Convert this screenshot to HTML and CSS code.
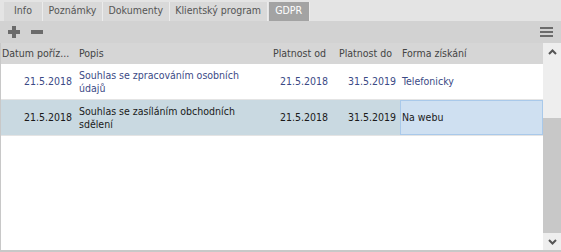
FILE: index.html
```html
<!DOCTYPE html>
<html lang="cs">
<head>
    <meta charset="UTF-8">
    <title>GDPR</title>
    <link rel="stylesheet" href="styles.css">
</head>
<body>
    <div class="panel">
        <div class="tabs">
            <div class="tab">Info</div>
            <div class="tab">Poznámky</div>
            <div class="tab">Dokumenty</div>
            <div class="tab">Klientský program</div>
            <div class="tab active">GDPR</div>
        </div>

        <div class="toolbar">
            <svg class="tool" width="14" height="14" viewBox="0 0 14 14">
                <rect x="5" y="1" width="4" height="12" fill="#6b6b6b"/>
                <rect x="1" y="5" width="12" height="4" fill="#6b6b6b"/>
            </svg>
            <svg class="tool" width="14" height="14" viewBox="0 0 14 14">
                <rect x="1" y="5" width="12" height="4" fill="#6b6b6b"/>
            </svg>
            <svg class="menu" width="13" height="12" viewBox="0 0 13 12">
                <rect x="0" y="1" width="13" height="2" fill="#6b6b6b"/>
                <rect x="0" y="5" width="13" height="2" fill="#6b6b6b"/>
                <rect x="0" y="9" width="13" height="2" fill="#6b6b6b"/>
            </svg>
        </div>

        <div class="grid-wrap">
            <div class="grid">
                <div class="row head">
                    <div class="cell c-date">Datum poříz...</div>
                    <div class="cell c-desc">Popis</div>
                    <div class="cell c-from">Platnost od</div>
                    <div class="cell c-to">Platnost do</div>
                    <div class="cell c-form">Forma získání</div>
                </div>
                <div class="row">
                    <div class="cell c-date num">21.5.2018</div>
                    <div class="cell c-desc">Souhlas se zpracováním osobních údajů</div>
                    <div class="cell c-from num">21.5.2018</div>
                    <div class="cell c-to num">31.5.2019</div>
                    <div class="cell c-form">Telefonicky</div>
                </div>
                <div class="row selected">
                    <div class="cell c-date num">21.5.2018</div>
                    <div class="cell c-desc">Souhlas se zasíláním obchodních sdělení</div>
                    <div class="cell c-from num">21.5.2018</div>
                    <div class="cell c-to num">31.5.2019</div>
                    <div class="cell c-form focus">Na webu</div>
                </div>
            </div>

            <div class="scrollbar">
                <div class="arrow">
                    <svg width="9" height="6" viewBox="0 0 9 6"><path d="M1 5 L4.5 1.5 L8 5" stroke="#555" stroke-width="2" fill="none"/></svg>
                </div>
                <div class="thumb"></div>
                <div class="track"></div>
                <div class="arrow">
                    <svg width="9" height="6" viewBox="0 0 9 6"><path d="M1 1 L4.5 4.5 L8 1" stroke="#555" stroke-width="2" fill="none"/></svg>
                </div>
            </div>
        </div>
    </div>
</body>
</html>
```

FILE: styles.css
```css
body {
    margin: 0;
    font-family: "DejaVu Sans Condensed", "DejaVu Sans", sans-serif;
    font-size: 10.5px;
    background: #ffffff;
}

.panel {
    width: 561px;
    height: 252px;
    display: flex;
    flex-direction: column;
    background: #e4e4e4;
}

.tabs {
    display: flex;
    height: 21px;
    padding: 2px 0 0 4px;
    box-sizing: border-box;
}

.tab {
    min-width: 39px;
    padding: 2px 5.6px 0 5.6px;
    color: #555;
    background: #d9d9d9;
    border-right: 1px solid #ececec;
    height: 19px;
    box-sizing: border-box;
    text-align: center;
}

.tab.active {
    min-width: 41px;
    margin-left: 1px;
    background: #a3a3a3;
    color: #ffffff;
}

.toolbar {
    display: flex;
    align-items: center;
    gap: 9px;
    height: 22px;
    padding: 0 8px 0 7px;
    background: #d2d2d2;
}

.toolbar .menu {
    margin-left: auto;
}

.grid-wrap {
    flex: 1;
    display: flex;
    background: #ffffff;
    border-left: 1px solid #c8c8c8;
    border-bottom: 2px solid #c8c8c8;
}

.grid {
    flex: 1;
}

.row {
    display: flex;
    height: 35px;
    border-bottom: 1px solid #e4e4e4;
    color: #3b4a86;
}

.row.head {
    height: 21px;
    background: #d6d6d6;
    color: #444;
    border-bottom: none;
    align-items: center;
}

.row.selected {
    background: #c9d9e1;
    color: #1a1a1a;
}

.cell {
    display: flex;
    align-items: center;
    padding: 0 3px;
    box-sizing: border-box;
    line-height: 13px;
}

.num {
    justify-content: flex-end;
}

.c-date { width: 75px; padding-left: 1px; }
.c-desc { width: 194px; }
.c-from { width: 66px; }
.c-to { width: 64px; }
.c-form { flex: 1; padding-left: 2px; }

.row .c-date.num { padding-right: 4px; }
.row .c-from.num { padding-right: 8px; }
.row .c-to.num { padding-right: 4px; }

.focus {
    background: #cfe0f1;
    border: 1px solid #a9c9ea;
    padding-left: 1px;
}

.scrollbar {
    width: 18px;
    display: flex;
    flex-direction: column;
    background: #c8c8c8;
}

.arrow {
    height: 17px;
    background: #eeeeee;
    display: flex;
    align-items: center;
    justify-content: center;
}

.thumb {
    height: 58px;
    background: #eeeeee;
}

.track {
    flex: 1;
}
```
